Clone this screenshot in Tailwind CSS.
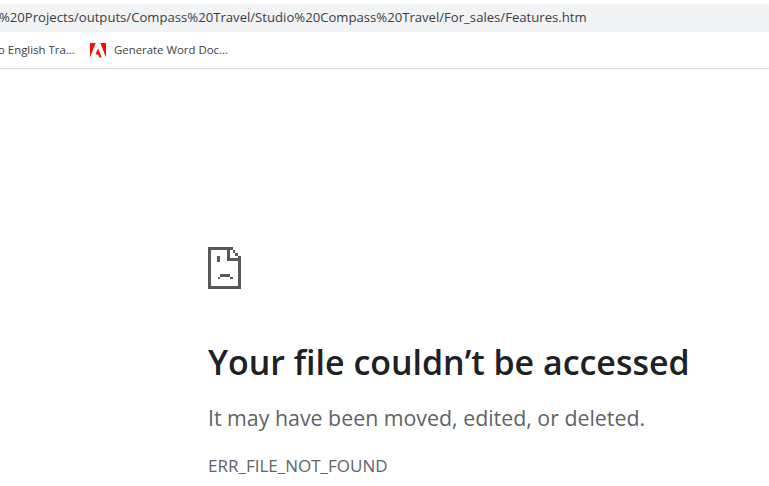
<!DOCTYPE html>
<html lang="en">
<head>
    <meta charset="UTF-8">
    <title>Features.htm</title>
    <script src="https://cdn.jsdelivr.net/npm/@tailwindcss/browser@4"></script>
</head>
<body class="bg-white w-[769px] h-[486px] overflow-hidden font-['Open_Sans',sans-serif]">
    <!-- Address bar -->
    <div class="pt-1 h-8">
        <div class="h-7 bg-[#f1f3f4] flex items-center overflow-hidden">
            <span class="text-[13.13px] text-[#3c4043] whitespace-nowrap ml-[-1px]">%20Projects/outputs/Compass%20Travel/Studio%20Compass%20Travel/For_sales/Features.htm</span>
        </div>
    </div>

    <!-- Bookmarks -->
    <div class="h-[37px] border-b border-[#dadce0] flex items-center overflow-hidden text-[11.4px] text-[#3c4043] whitespace-nowrap">
        <span class="ml-[-6px] w-[80px]">to English Tra...</span>
        <svg class="ml-[16px] w-4 h-[15px]" viewBox="0 0 16 15" fill="#f40f02">
            <path d="M0 0h5.7L0 14.5zM10.3 0H16v14.5z" />
            <path d="M8 5.2l3.7 9.3H9.3l-1.1-2.9H5.5z" />
        </svg>
        <span class="ml-[8px]">Generate Word Doc...</span>
    </div>

    <!-- Error content -->
    <div class="ml-[208px] pt-[178px]">
        <svg class="w-[33px] h-[42px] block" viewBox="0 0 33 42" fill="#58595b" shape-rendering="crispEdges">
            <path d="M0 0h25v3H3v36h27V14h3v28H0z" />
            <path d="M19 3h3v8h11v3H19z" />
            <path d="M25 3h2v3h-2zM27 6h3v3h-3zM30 9h3v2h-3z" />
            <path d="M9 9h3v6H9zM12 27h10v3H12zM10 30h2v2h-2zM22 30h3v2h-3z" />
        </svg>
        <h1 class="mt-[51px] text-[33.95px] leading-[44px] font-semibold text-[#202124] whitespace-nowrap">Your file couldn’t be accessed</h1>
        <p class="mt-[20px] text-[21.35px] leading-[28px] text-[#5f6368] whitespace-nowrap">It may have been moved, edited, or deleted.</p>
        <p class="mt-[23px] text-[17px] leading-[22px] text-[#5f6368] whitespace-nowrap">ERR_FILE_NOT_FOUND</p>
    </div>
</body>
</html>
